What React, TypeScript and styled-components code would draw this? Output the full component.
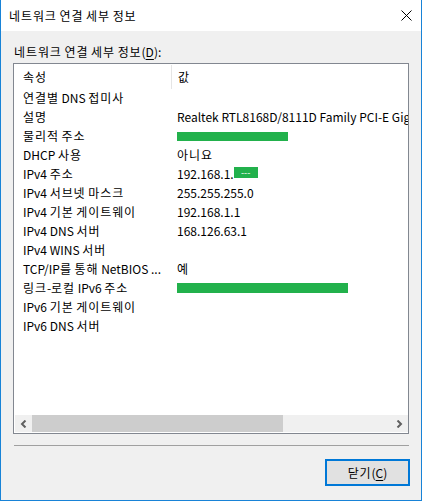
import styled, { createGlobalStyle } from "styled-components";

const GlobalStyle = createGlobalStyle`
  html, body {
    margin: 0;
    padding: 0;
    background: #ffffff;
  }
  * {
    box-sizing: border-box;
  }
`;

const Window = styled.div`
  width: 422px;
  height: 501px;
  display: flex;
  flex-direction: column;
  border: 1px solid #1883d7;
  border-top: none;
  font-family: "Noto Sans CJK KR", "Noto Sans", sans-serif;
  font-size: 12px;
  color: #000000;
  overflow: hidden;
`;

const Hangul = styled.span`
  letter-spacing: 0.9px;
`;

const TitleBar = styled.div`
  height: 31px;
  flex-shrink: 0;
  display: flex;
  align-items: center;
  justify-content: space-between;
  background: #ffffff;
  padding: 0 9px 0 8px;
`;

const Title = styled.span`
  font-size: 12px;
  line-height: 16px;
`;

const CloseBtn = styled.div`
  width: 12px;
  height: 12px;
  display: flex;
  align-items: center;
  justify-content: center;
  svg {
    display: block;
  }
`;

const Body = styled.div`
  flex: 1;
  display: flex;
  flex-direction: column;
  background: #f0f0f0;
  padding: 12px 11px 14px 12px;
`;

const Label = styled.div`
  height: 20px;
  line-height: 18px;
  padding-left: 1px;
`;

const Mnemonic = styled.span`
  text-decoration: underline;
  text-underline-offset: 2px;
`;

const ListBox = styled.div`
  height: 371px;
  width: 396px;
  border: 1px solid #828790;
  background: #ffffff;
  display: flex;
  flex-direction: column;
  padding: 0 0 1px 1px;
`;

const ListArea = styled.div`
  flex: 1;
  overflow: hidden;
`;

const HeaderRow = styled.div`
  height: 24px;
  display: grid;
  grid-template-columns: 156px 1fr;
  align-items: center;
`;

const HeaderCell = styled.div<{ $divider?: boolean }>`
  height: 100%;
  display: flex;
  align-items: center;
  padding-left: ${(p) => (p.$divider ? "6px" : "8px")};
  border-left: ${(p) => (p.$divider ? "1px solid #e5e5e5" : "none")};
  margin-top: 1px;
`;

const Row = styled.div`
  height: 19px;
  display: grid;
  grid-template-columns: 156px 1fr;
  align-items: center;
  white-space: nowrap;
`;

const NameCell = styled.div`
  padding-left: 8px;
  padding-right: 6px;
  overflow: hidden;
  line-height: 19px;
`;

const ValueCell = styled.div`
  padding-left: 6px;
  overflow: hidden;
  line-height: 19px;
  display: flex;
  align-items: center;
`;

const Mask = styled.span<{ $w: number; $h: number; $dy?: number }>`
  display: inline-flex;
  align-items: center;
  justify-content: center;
  width: ${(p) => p.$w}px;
  height: ${(p) => p.$h}px;
  background: #22b14c;
  color: #ffffff;
  font-size: 9px;
  line-height: 1;
  margin-top: ${(p) => p.$dy ?? 0}px;
`;

const HScroll = styled.div`
  height: 17px;
  flex-shrink: 0;
  display: flex;
  background: #f0f0f0;
`;

const ArrowBtn = styled.div`
  width: 17px;
  height: 100%;
  display: flex;
  align-items: center;
  justify-content: center;
`;

const Track = styled.div`
  flex: 1;
  display: flex;
`;

const Thumb = styled.div`
  width: 251px;
  height: 100%;
  background: #cdcdcd;
`;

const Separator = styled.div`
  height: 1px;
  margin: 11px 1px 0 1px;
  background: #a0a0a0;
`;

const Footer = styled.div`
  display: flex;
  justify-content: flex-end;
  margin-top: 13px;
`;

const Button = styled.button`
  width: 85px;
  height: 27px;
  border: 2px solid #0078d7;
  background: #e1e1e1;
  font-family: inherit;
  font-size: 12px;
  color: #000000;
  padding: 0 0 1px 0;
`;

// Hangul runs get a bit of extra tracking to match the wider system font
function K({ children }: { children: string }) {
  const parts = children.split(/([\uAC00-\uD7A3]+)/);
  return (
    <>
      {parts.map((part, i) =>
        /[\uAC00-\uD7A3]/.test(part) ? <Hangul key={i}>{part}</Hangul> : part
      )}
    </>
  );
}

type Item = { name: string; value?: React.ReactNode };

const items: Item[] = [
  { name: "연결별 DNS 접미사" },
  { name: "설명", value: "Realtek RTL8168D/8111D Family PCI-E Gigabit Ethernet NIC (NDIS 6.20)" },
  { name: "물리적 주소", value: <Mask $w={111} $h={9} $dy={1} /> },
  { name: "DHCP 사용", value: <K>아니요</K> },
  {
    name: "IPv4 주소",
    value: (
      <>
        192.168.1.
        <Mask $w={24} $h={11} $dy={-3}>
          ---
        </Mask>
      </>
    ),
  },
  { name: "IPv4 서브넷 마스크", value: "255.255.255.0" },
  { name: "IPv4 기본 게이트웨이", value: "192.168.1.1" },
  { name: "IPv4 DNS 서버", value: "168.126.63.1" },
  { name: "IPv4 WINS 서버" },
  { name: "TCP/IP를 통해 NetBIOS ...", value: <K>예</K> },
  { name: "링크-로컬 IPv6 주소", value: <Mask $w={171} $h={10} /> },
  { name: "IPv6 기본 게이트웨이" },
  { name: "IPv6 DNS 서버" },
];

function Chevron({ dir }: { dir: "left" | "right" }) {
  return (
    <svg width="7" height="8" viewBox="0 0 7 8">
      <path
        d={dir === "left" ? "M5.5 0.5 L2 4 L5.5 7.5" : "M1.5 0.5 L5 4 L1.5 7.5"}
        fill="none"
        stroke="#606060"
        strokeWidth="2"
      />
    </svg>
  );
}

export default function App() {
  return (
    <>
      <GlobalStyle />
      <Window>
        <TitleBar>
          <Title>
            <K>네트워크 연결 세부 정보</K>
          </Title>
          <CloseBtn>
            <svg width="11" height="11" viewBox="0 0 11 11">
              <path d="M0.5 0.5 L10.5 10.5 M10.5 0.5 L0.5 10.5" stroke="#000" strokeWidth="1" />
            </svg>
          </CloseBtn>
        </TitleBar>
        <Body>
          <Label>
            <K>네트워크 연결 세부 정보</K>(<Mnemonic>D</Mnemonic>):
          </Label>
          <ListBox>
            <ListArea>
              <HeaderRow>
                <HeaderCell>
                  <K>속성</K>
                </HeaderCell>
                <HeaderCell $divider>
                  <K>값</K>
                </HeaderCell>
              </HeaderRow>
              {items.map((it) => (
                <Row key={it.name}>
                  <NameCell>
                    <K>{it.name}</K>
                  </NameCell>
                  <ValueCell>{it.value}</ValueCell>
                </Row>
              ))}
            </ListArea>
            <HScroll>
              <ArrowBtn>
                <Chevron dir="left" />
              </ArrowBtn>
              <Track>
                <Thumb />
              </Track>
              <ArrowBtn>
                <Chevron dir="right" />
              </ArrowBtn>
            </HScroll>
          </ListBox>
          <Separator />
          <Footer>
            <Button>
              <K>닫기</K>(<Mnemonic>C</Mnemonic>)
            </Button>
          </Footer>
        </Body>
      </Window>
    </>
  );
}
